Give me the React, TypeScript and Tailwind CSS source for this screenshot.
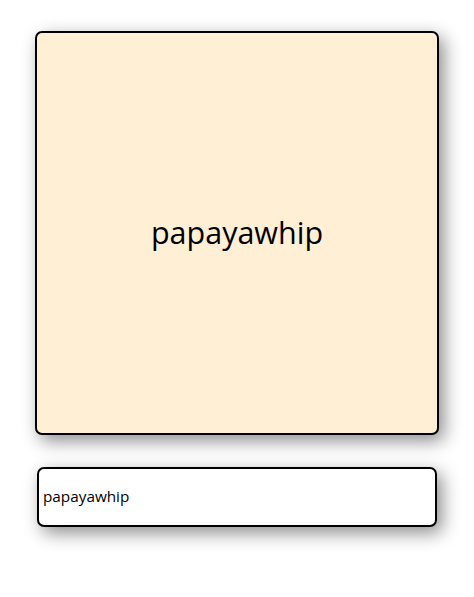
import { useState } from 'react';

export default function App() {
  const [color, setColor] = useState('papayawhip');

  return (
    <div className="w-[474px] h-[597px] bg-white flex flex-col items-center pt-[31px] font-['Open_Sans',sans-serif]">
      {/* Swatch */}
      <div
        className="w-[404px] h-[404px] border-2 border-black rounded-[7px] shadow-[5px_6px_18px_rgba(0,0,0,0.45)] flex items-center justify-center"
        style={{ backgroundColor: color }}
      >
        <span className="text-[30.5px] text-black mb-[1px]">{color}</span>
      </div>

      {/* Input */}
      <input
        type="text"
        value={color}
        onChange={(e) => setColor(e.target.value)}
        className="mt-[32px] w-[400px] h-[60px] border-2 border-black rounded-[7px] bg-white px-[4px] pb-[3px] text-[15.3px] text-black shadow-[5px_6px_18px_rgba(0,0,0,0.45)] focus:outline-none"
      />
    </div>
  );
}
